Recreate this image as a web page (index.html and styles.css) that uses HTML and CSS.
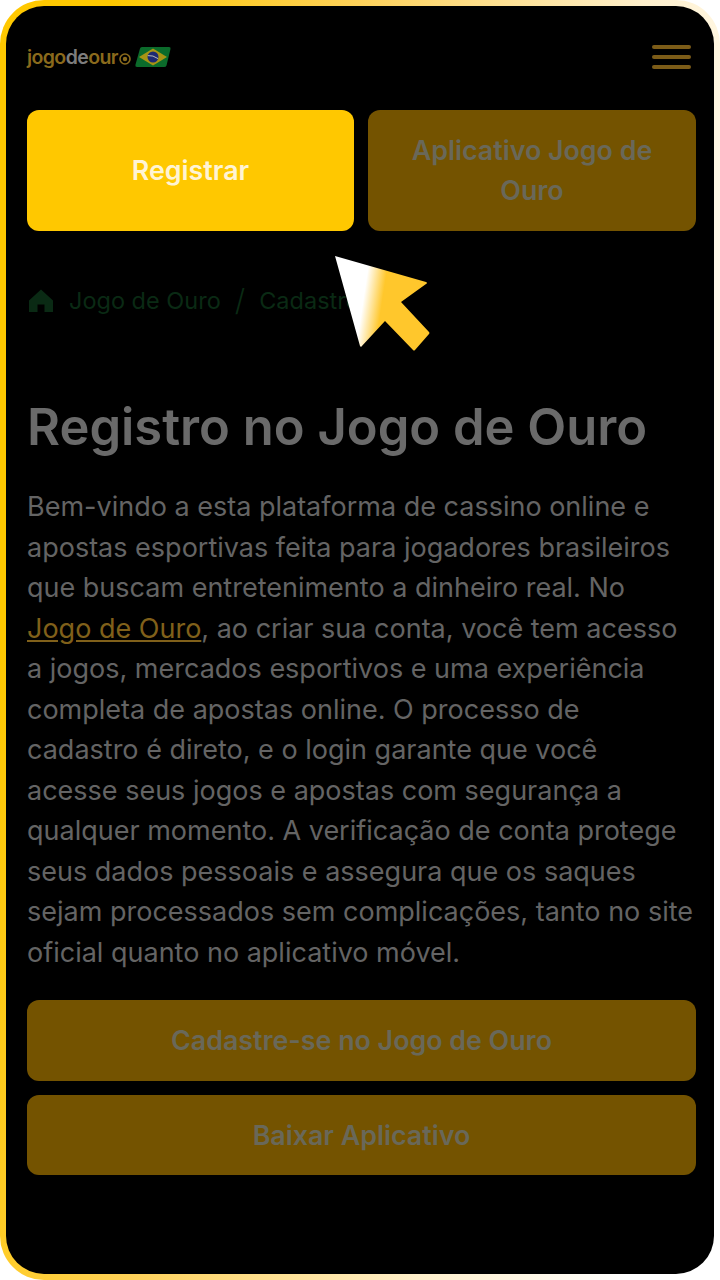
FILE: index.html
```html
<!DOCTYPE html>
<html lang="pt">
<head>
<meta charset="utf-8">
<title>Registro no Jogo de Ouro</title>
<link rel="stylesheet" href="styles.css">
</head>
<body>
<div class="frame">
  <div class="screen">
    <header class="top">
      <div class="logo">
        <span class="logo-text"><span class="gold">jogo</span><span class="grey">de</span><span class="gold">our</span></span>
        <svg class="ball" viewBox="0 0 12 12"><circle cx="6" cy="6" r="5" fill="none" stroke="#8a6a1c" stroke-width="1.6"/><circle cx="6" cy="6" r="2.200" fill="#8a6a1c"/></svg>
        <svg class="flag" viewBox="0 0 36 20"><path d="M5 1.500Q5.300 0 7 0H34Q36 0 35.500 2L31.500 18.500Q31 20 29 20H2Q0 20 .4 18Z" fill="#0b6b2b"/><path d="M18 1.500L32 10L18 18.500L4 10Z" fill="#a89414"/><circle cx="18" cy="10" r="5.500" fill="#1d2a72"/><path d="M12.800 8.600Q18 8 23 11.600" fill="none" stroke="#b9b9b9" stroke-width="1"/></svg>
      </div>
      <div class="burger"><span></span><span></span><span></span></div>
    </header>
    <div class="cta-row">
      <a class="btn btn-on">Registrar</a>
      <a class="btn btn-dim">Aplicativo Jogo de Ouro</a>
    </div>
    <nav class="crumbs">
      <svg class="home" viewBox="0 0 24 24"><path d="M12 1.500L24 12.500V24H15.500V16.500H8.500V24H0V12.500Z" fill="#0a2a14"/></svg>
      <span>Jogo de Ouro</span>
      <span class="slash">/</span>
      <span>Cadastro</span>
    </nav>
    <h1 class="title">Registro no Jogo de Ouro</h1>
    <p class="intro">Bem-vindo a esta plataforma de cassino online e apostas esportivas feita para jogadores brasileiros que buscam entretenimento a dinheiro real. No <a class="link">Jogo de Ouro</a>, ao criar sua conta, você tem acesso a jogos, mercados esportivos e uma experiência completa de apostas online. O processo de cadastro é direto, e o login garante que você acesse seus jogos e apostas com segurança a qualquer momento. A verificação de conta protege seus dados pessoais e assegura que os saques sejam processados sem complicações, tanto no site oficial quanto no aplicativo móvel.</p>
    <div class="stack">
      <a class="btn btn-dim btn-wide">Cadastre-se no Jogo de Ouro</a>
      <a class="btn btn-dim btn-wide">Baixar Aplicativo</a>
    </div>
    <svg class="cursor" viewBox="0 0 96 96">
      <defs>
        <linearGradient id="cg" x1="0" y1="0" x2="1" y2="0.150">
          <stop offset="0.36" stop-color="#ffffff"/>
          <stop offset="0.56" stop-color="#ffc72c"/>
          <stop offset="1" stop-color="#ffc72c"/>
        </linearGradient>
      </defs>
      <path d="M0 0L91 26Q93 27 91 28L66 46L94 76Q95 77 94 78L80 94Q79 95 78 94L50 65L26 91L25 90Z" fill="url(#cg)"/>
    </svg>
  </div>
</div>
</body>
</html>
```
FILE: styles.css
```css
* { box-sizing: border-box; }
html, body { margin: 0; padding: 0; background: #fff; }
body { width: 720px; height: 1280px; overflow: hidden; font-family: Inter, "Liberation Sans", sans-serif; }
.frame {
  width: 720px; height: 1280px; padding: 6px;
  border-radius: 44px;
  background: linear-gradient(100deg, #ffc800 0%, #ffc800 12%, #ffd25a 38%, #fff0cc 68%, #ffffff 90%);
}
.screen {
  position: relative;
  height: 1268px;
  background: #000;
  border-radius: 38px;
  padding: 0 21px;
  display: flex; flex-direction: column;
}
.top { height: 103.500px; padding-top: 36px; display: flex; justify-content: space-between; align-items: flex-start; }
.logo { display: flex; align-items: center; height: 30px; }
.logo-text { font-family: Inter, sans-serif; font-weight: 600; font-size: 19.500px; letter-spacing: -0.600px; line-height: 30px; }
.gold { color: #8a6a1c; }
.grey { color: #7d7d7d; }
.ball { width: 12px; height: 12px; margin: 3px 0 0 1px; }
.flag { width: 36px; height: 20px; margin-left: 4px; }
.burger { width: 39px; display: flex; flex-direction: column; gap: 6px; margin: 3px 2px 0 0; }
.burger span { height: 4px; border-radius: 2px; background: #7c5c18; }
.cta-row { display: grid; grid-template-columns: 327px 328px; gap: 14px; }
.btn {
  display: flex; align-items: center; justify-content: center; text-align: center;
  border-radius: 12px; font-weight: 600; font-size: 26.800px; line-height: 40px;
}
.cta-row .btn { height: 121px; padding: 0 30px; }
.btn-on { background: #ffc800; color: #fff4d4; }
.btn-dim { background: #745300; color: #696859; }
.crumbs { display: flex; align-items: center; margin-top: 54.500px; height: 30px; font-size: 23.500px; color: #0a2a14; }
.home { width: 24px; height: 24px; margin: 0 16px 0 2px; }
.slash { margin: 0 14px; font-size: 30px; font-weight: 300; }
.title { margin: 84px 0 0; font-size: 50.700px; line-height: 56px; font-weight: 600; color: #6a6a6a; white-space: nowrap; }
.intro { margin: 32px 0 0; font-size: 27px; line-height: 40.500px; color: #646464; width: 668px; }
.link { color: #80601a; text-decoration: underline; }
.stack { display: flex; flex-direction: column; gap: 14px; margin-top: 27px; }
.btn-wide { height: 80.500px; width: 669px; }
.cursor { position: absolute; left: 329px; top: 250px; width: 96px; height: 96px; }
```
